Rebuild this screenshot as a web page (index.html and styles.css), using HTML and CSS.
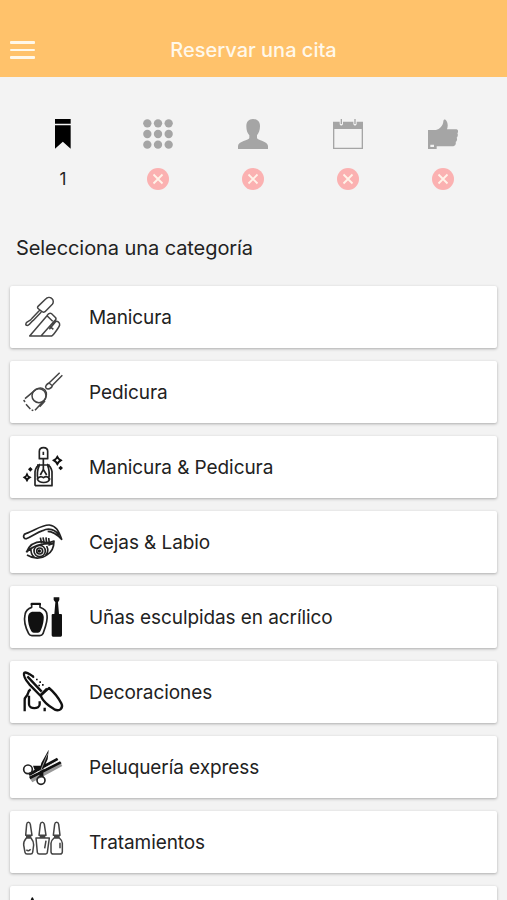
FILE: index.html
```html
<!DOCTYPE html>
<html lang="es">

<head>
    <meta charset="UTF-8">
    <meta name="viewport" content="width=device-width, initial-scale=1.0">
    <title>Reservar una cita</title>

    <link rel="stylesheet" href="styles.css">
</head>

<body>
    <header class="topbar">
        <button class="menu" aria-label="Menú">
            <span></span>
            <span></span>
            <span></span>
        </button>
        <h1>Reservar una cita</h1>
    </header>

    <main>
        <nav class="steps">
            <div class="step active">
                <svg class="step-icon" viewBox="0 0 90 90">
                    <path d="M21 0H68V14H21ZM21 19H68V89L44.500 68L21 89Z" />
                </svg>
                <span class="number">1</span>
            </div>
            <div class="step">
                <svg class="step-icon" viewBox="0 0 90 90">
                    <circle cx="13" cy="13" r="12.500" /><circle cx="45" cy="13" r="12.500" /><circle cx="77" cy="13" r="12.500" />
                    <circle cx="13" cy="45" r="12.500" /><circle cx="45" cy="45" r="12.500" /><circle cx="77" cy="45" r="12.500" />
                    <circle cx="13" cy="77" r="12.500" /><circle cx="45" cy="77" r="12.500" /><circle cx="77" cy="77" r="12.500" />
                </svg>
                <svg class="cross" viewBox="0 0 22 22"><circle cx="11" cy="11" r="11" /><path d="M6.500 6.500L15.500 15.500M15.500 6.500L6.500 15.500" /></svg>
            </div>
            <div class="step">
                <svg class="step-icon" viewBox="0 0 90 90">
                    <path d="M45 0C59 0 66 9 66 22C66 34 62 43 57 49V57C57 64 90 67 90 81V90H0V81C0 67 34 64 34 57V49C28 43 25 34 25 22C25 9 32 0 45 0Z" />
                </svg>
                <svg class="cross" viewBox="0 0 22 22"><circle cx="11" cy="11" r="11" /><path d="M6.500 6.500L15.500 15.500M15.500 6.500L6.500 15.500" /></svg>
            </div>
            <div class="step">
                <svg class="step-icon" viewBox="0 0 90 90">
                    <path fill-rule="evenodd" d="M0 8H20V14C20 21 30 21 30 14V8H61V14C61 21 71 21 71 14V8H90V90H0ZM4 30V86H86V30Z" />
                    <path d="M23 0H27V15H23ZM64 0H68V15H64Z" />
                </svg>
                <svg class="cross" viewBox="0 0 22 22"><circle cx="11" cy="11" r="11" /><path d="M6.500 6.500L15.500 15.500M15.500 6.500L6.500 15.500" /></svg>
            </div>
            <div class="step">
                <svg class="step-icon" viewBox="0 0 90 90">
                    <path fill-rule="evenodd" d="M0 33H24C35 31 45 21 46 7C47 -1 53 1 56 7C61 17 59 24 57 31H83C91 31 93 38 88 42C91 48 89 53 86 56C89 62 86 67 83 69C85 75 81 81 76 82H26V90H0ZM7 77V84H18V77Z" />
                </svg>
                <svg class="cross" viewBox="0 0 22 22"><circle cx="11" cy="11" r="11" /><path d="M6.500 6.500L15.500 15.500M15.500 6.500L6.500 15.500" /></svg>
            </div>
        </nav>

        <h2>Selecciona una categoría</h2>

        <div class="categories">
            <div class="category">
                <svg class="icon" viewBox="0 0 120 120">
                    <path d="M45 28L68 6C73 0 81 0 86 4C92 8 92 17 88 22L66 44C63 46 59 46 56 43L47 36C43 33 43 30 45 28ZM50 40L25 66M55 45L30 71M25 66C22 72 11 73 9 79C6 85 14 88 19 82C24 78 25 74 30 71M20 117L72 56C78 46 85 48 89 53L98 62C100 66 98 70 94 72L54 117ZM72 56L89 73M79 97L97 75C102 69 111 77 110 84C109 89 92 114 86 117H20M79 86L91 97" />
                </svg>
                <span>Manicura</span>
            </div>
            <div class="category">
                <svg class="icon" viewBox="0 0 120 120">
                    <path d="M110 2L78 33M118 10L89 39M78 33C72 36 65 43 69 48C75 55 87 48 89 39M78 33L89 42M2 84L6 90M6 80L39 52C53 43 67 50 70 62C72 75 66 84 57 92L36 115M9 97L22 111M26 114L31 116" />
                    <circle cx="48" cy="71" r="21" />
                    <path d="M66 87L50 104" />
                </svg>
                <span>Pedicura</span>
            </div>
            <div class="category">
                <svg class="icon heavy" viewBox="0 0 120 120">
                    <path d="M49 35V13C49 -2 74 -2 74 13V35ZM61 14V24M61 35V68M42 54H80M36 116V74C38 63 43 56 51 52M87 116V74C85 63 80 56 72 52M36 116H89M49 55C42 70 42 86 45 98M74 55C80 70 79 86 77 98M61 67L52 84M61 67L71 84M43 96C48 88 56 88 61 92C68 88 76 89 80 96C76 110 48 110 43 96Z" />
                    <path class="solid" fill-rule="evenodd" d="M103 24L109 34L119 40L109 47L103 57L97 47L87 40L97 34ZM103 35L98 40L103 45L108 40ZM12 76L17 86L26 91L17 97L12 106L7 97L-1 91L7 86ZM12 88L9 91L12 94L15 91ZM22 60L29 67L22 74L15 67ZM113 56L120 63L113 70L106 63Z" />
                </svg>
                <span>Manicura &amp; Pedicura</span>
            </div>
            <div class="category">
                <svg class="icon heavy" viewBox="0 0 120 120">
                    <path d="M8 51C-2 46 1 36 10 34C31 28 56 8 79 9C99 12 106 24 116 52C99 34 87 28 74 28M59 26C41 31 29 43 8 51M59 26C77 17 97 22 109 41" />
                    <path d="M10 91C19 68 37 59 57 59C70 65 82 61 93 57C93 76 84 91 73 98C55 112 31 111 12 99M10 91C28 70 59 64 92 64M24 77C23 90 27 101 34 105M71 72C77 84 74 94 67 101" />
                    <circle cx="50" cy="87" r="17" /><circle cx="50" cy="87" r="9" />
                    <circle class="solid" cx="49" cy="87" r="5" />
                    <path d="M56 64L52 47M64 64L60 46M71 64L69 46M79 63L77 48M76 70L91 64" />
                </svg>
                <span>Cejas &amp; Labio</span>
            </div>
            <div class="category">
                <svg class="icon heavy" viewBox="0 0 120 120">
                    <path d="M26 20H51V31C60 34 71 42 72 53C75 72 67 91 60 110Q57 116 50 116H27Q20 116 17 110C8 93 2 71 6 53C8 42 16 34 26 31Z" />
                    <path class="solid" d="M27 44H51C60 48 64 56 62 68C61 81 56 95 52 103Q50 107 45 107H32Q27 107 25 103C18 91 14 75 15 60C16 51 20 46 27 44ZM23 19H54V24H23ZM92 1H109V9L105 16L108 51H114Q117 51 117 54V115Q117 119 113 119H90Q86 119 86 115V54Q86 51 89 51H94L97 16L92 9Z" />
                </svg>
                <span>Uñas esculpidas en acrílico</span>
            </div>
            <div class="category">
                <svg class="icon bold" viewBox="0 0 120 120">
                    <path d="M31 14C20 6 5 -3 3 4C1 14 11 28 19 37L53 72M13 13L56 59M72 50L52 70M52 70C60 88 78 103 94 112C110 120 122 108 115 94C106 77 90 58 78 48L52 72M5 118V84C5 72 13 75 15 64C16 57 19 54 23 52M18 71V97C18 112 50 112 50 97V88M65 107V118" />
                    <path class="solid" d="M30 10L35 15L31 19L26 14ZM39 20H44V25H39ZM49 28H54V33H49ZM57 36H62V41H57ZM46 38H51V43H46Z" />
                </svg>
                <span>Decoraciones</span>
            </div>
            <div class="category">
                <svg class="icon heavy" viewBox="0 0 120 120">
                    <path class="grey" d="M20 94L111 45L118 57L28 106Z" />
                    <path class="solid" d="M16 79L102 32L106 39L20 87ZM18 89L111 43L116 49L22 97ZM77 8L74 37L61 65L61 91H49L50 67L55 48ZM30 56L64 56L62 69L35 69Z" />
                    <path class="highlight" d="M38 78L100 45M74 20L54 68" />
                    <circle cx="15" cy="67" r="13" /><circle cx="54" cy="100" r="12" />
                </svg>
                <span>Peluquería express</span>
            </div>
            <div class="category">
                <svg class="icon" viewBox="0 0 120 120">
                    <path d="M8 40L11 7Q12 1 16 1Q21 1 22 7L27 40ZM48 40L52 7Q53 1 58 1Q62 1 64 7L69 40ZM91 40L95 7Q96 1 101 1Q106 1 107 7L111 40ZM9 44H25M50 44H67M93 44H110M10 48C5 54 1 61 2 69L6 91Q7 96 12 96H23Q28 96 29 91L32 69C32 61 29 54 24 48ZM39 48H79L73 91Q73 96 68 96H49Q44 96 43 91ZM93 48C87 53 84 57 84 64V89Q84 96 91 96H111Q118 96 118 89V64C118 57 115 53 109 48ZM69 56L65 79M111 62V79M10 83Q16 90 23 82" />
                </svg>
                <span>Tratamientos</span>
            </div>
            <div class="category">
                <svg class="icon" viewBox="0 0 120 120">
                    <path class="solid" d="M28 1C31 1 31 7 35 12H21C25 7 25 1 28 1Z" />
                </svg>
            </div>
        </div>
    </main>
</body>

</html>
```

FILE: styles.css
```css
* {
    box-sizing: border-box;
}

body {
    margin: 0;
    height: 900px;
    overflow: hidden;
    background: #f3f3f3;
    color: #222;
    font-family: Inter, "Liberation Sans", sans-serif;
}

.topbar {
    display: grid;
    grid-template-columns: 60px 1fr 60px;
    align-items: center;
    height: 77px;
    padding-top: 23px;
    background: #ffc26b;
}

.topbar h1 {
    margin: 0;
    text-align: center;
    color: #fff8ea;
    font-size: 20px;
    font-weight: 500;
    line-height: 24px;
}

.menu {
    display: flex;
    flex-direction: column;
    gap: 5px;
    width: 45px;
    padding: 0 10px;
    border: none;
    background: none;
}

.menu span {
    width: 25px;
    height: 2.500px;
    border-radius: 1px;
    background: #fff8ea;
}

.steps {
    display: grid;
    grid-template-columns: repeat(5, 1fr);
    padding: 42px 16.500px 0 15.500px;
}

.step {
    display: flex;
    flex-direction: column;
    align-items: center;
    gap: 19px;
}

.step-icon {
    width: 30px;
    height: 30px;
    fill: #a5a5a5;
}

.active .step-icon {
    fill: #000;
}

.number {
    font-size: 17px;
    line-height: 22px;
}

.cross {
    width: 22px;
    height: 22px;
    fill: #fbb1b1;
    stroke: #fff3e9;
    stroke-width: 1.800;
}

.cross circle {
    stroke: none;
}

h2 {
    margin: 46px 16px 26px;
    font-size: 20px;
    font-weight: 400;
    line-height: 24px;
    letter-spacing: -0.08px;
}

.categories {
    display: flex;
    flex-direction: column;
    gap: 13px;
    padding: 0 10px;
}

.category {
    display: flex;
    align-items: center;
    gap: 26px;
    height: 62px;
    padding-left: 13px;
    border-radius: 2px;
    background: #fff;
    box-shadow: 0 1px 3px rgba(0, 0, 0, 0.3);
    font-size: 19px;
    letter-spacing: -0.08px;
}

.icon {
    width: 40px;
    height: 40px;
    overflow: visible;
    fill: none;
    stroke: #444;
    stroke-width: 4.500;
    stroke-linejoin: round;
}

.heavy {
    stroke: #222;
    stroke-width: 5;
}

.bold {
    stroke: #111;
    stroke-width: 7;
}

.icon .solid {
    fill: #111;
    stroke: none;
}

.icon .grey {
    fill: #999;
    stroke: none;
}

.icon .highlight {
    stroke: #ddd;
    stroke-width: 2;
}
```
